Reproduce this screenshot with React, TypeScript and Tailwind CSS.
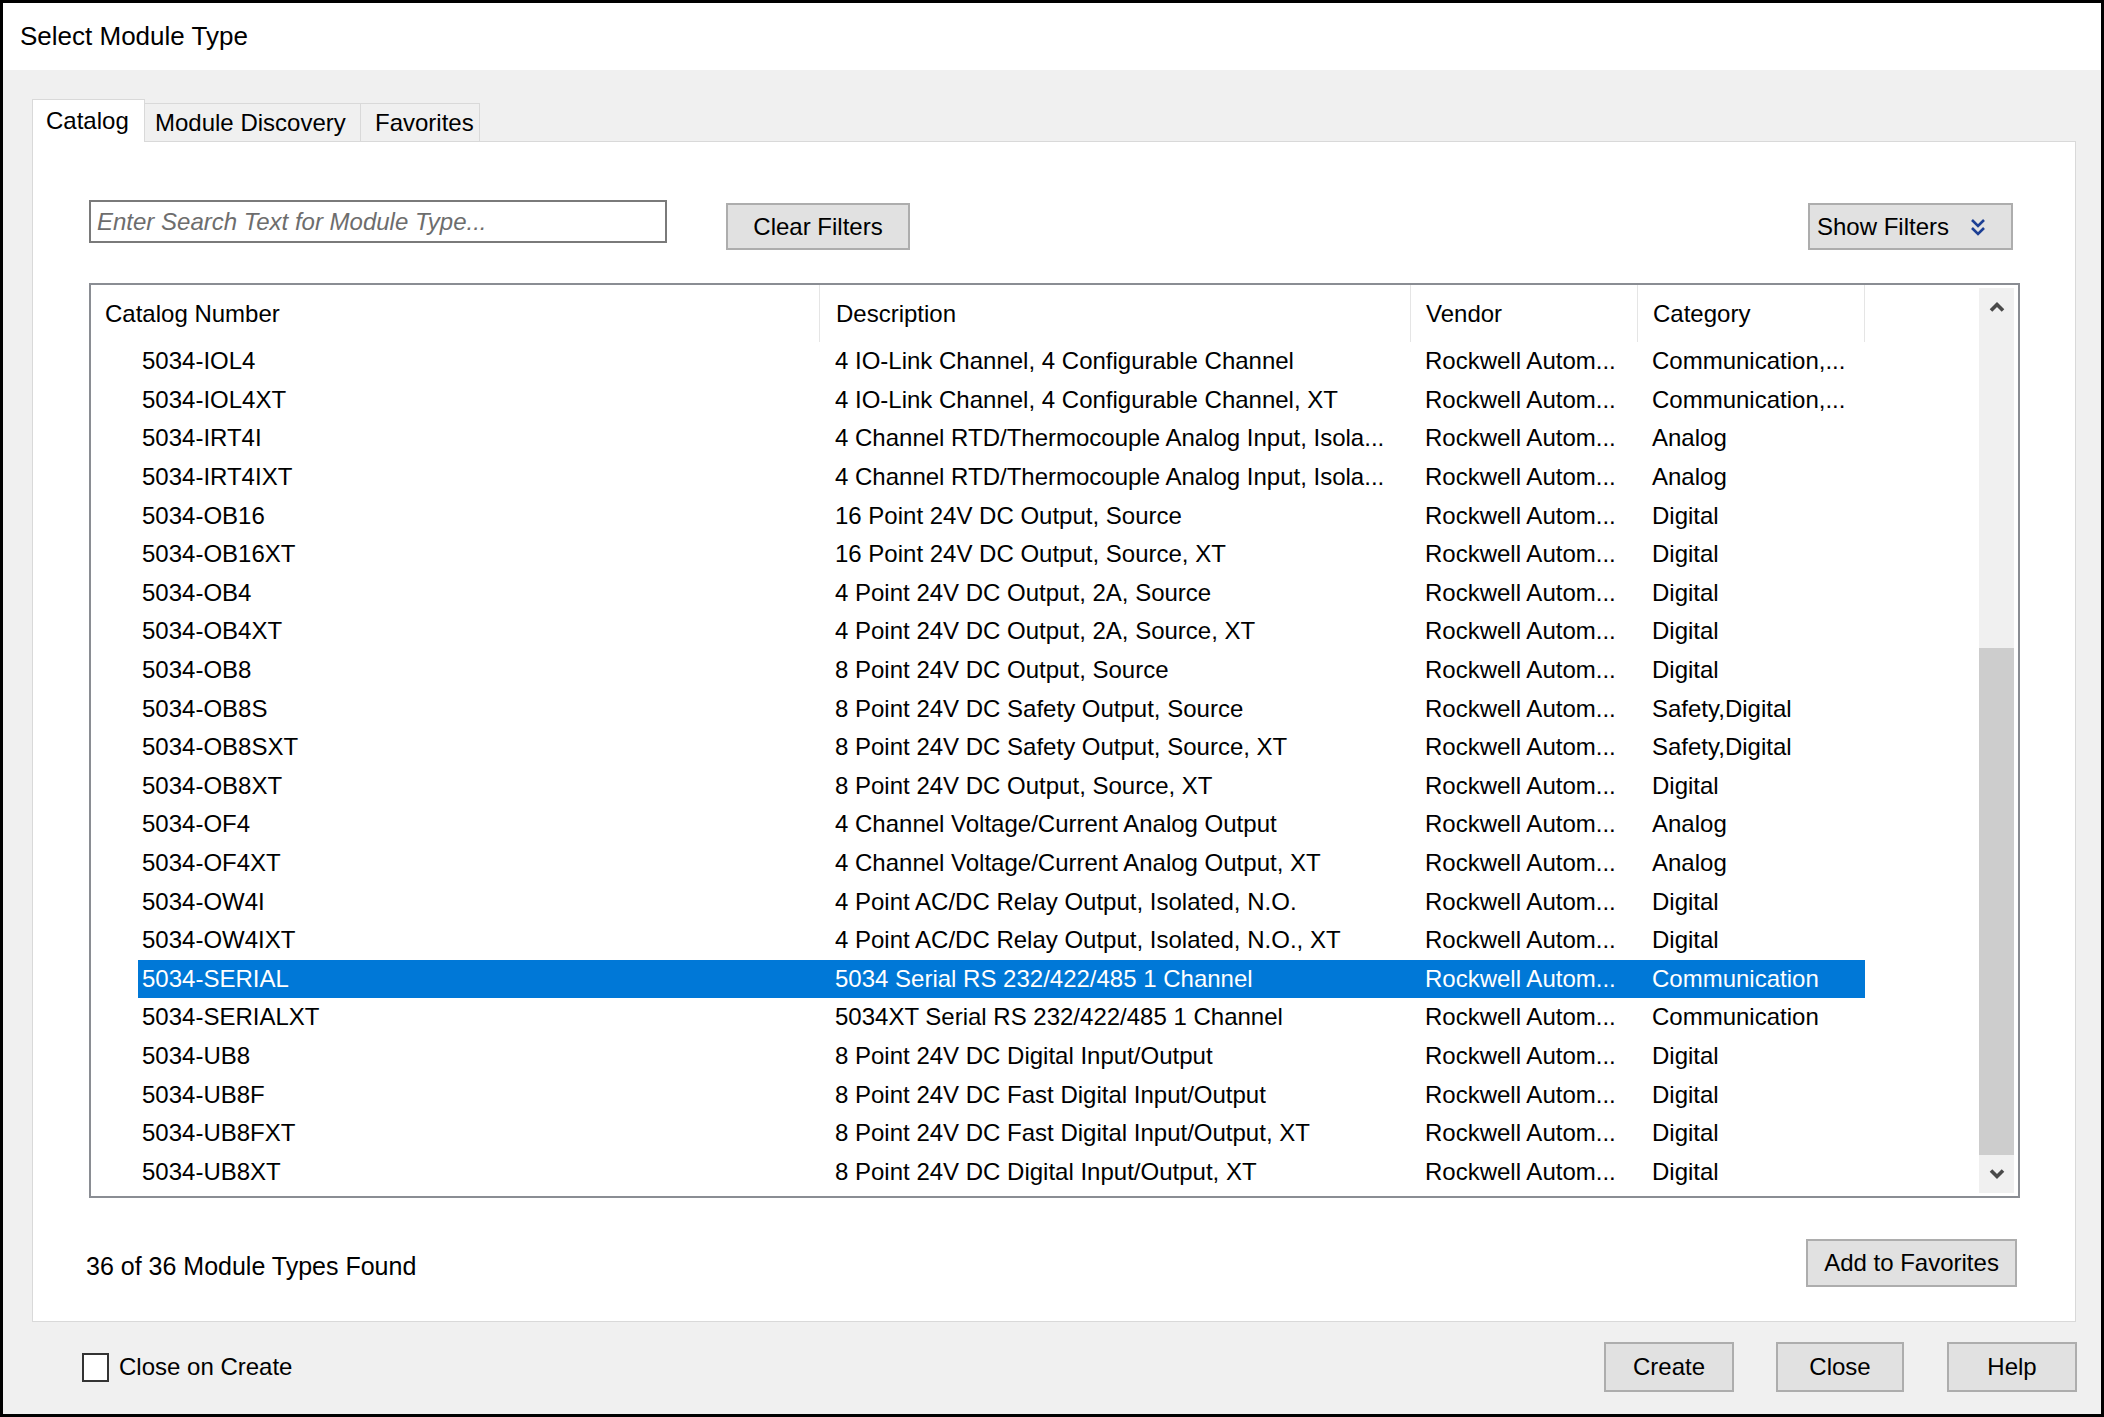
import React from 'react';

type Row = { cat: string; desc: string; category: string };

const rows: Row[] = [
  { cat: '5034-IOL4', desc: '4 IO-Link Channel, 4 Configurable Channel', category: 'Communication,...' },
  { cat: '5034-IOL4XT', desc: '4 IO-Link Channel, 4 Configurable Channel, XT', category: 'Communication,...' },
  { cat: '5034-IRT4I', desc: '4 Channel RTD/Thermocouple Analog Input, Isola...', category: 'Analog' },
  { cat: '5034-IRT4IXT', desc: '4 Channel RTD/Thermocouple Analog Input, Isola...', category: 'Analog' },
  { cat: '5034-OB16', desc: '16 Point 24V DC Output, Source', category: 'Digital' },
  { cat: '5034-OB16XT', desc: '16 Point 24V DC Output, Source, XT', category: 'Digital' },
  { cat: '5034-OB4', desc: '4 Point 24V DC Output, 2A, Source', category: 'Digital' },
  { cat: '5034-OB4XT', desc: '4 Point 24V DC Output, 2A, Source, XT', category: 'Digital' },
  { cat: '5034-OB8', desc: '8 Point 24V DC Output, Source', category: 'Digital' },
  { cat: '5034-OB8S', desc: '8 Point 24V DC Safety Output, Source', category: 'Safety,Digital' },
  { cat: '5034-OB8SXT', desc: '8 Point 24V DC Safety Output, Source, XT', category: 'Safety,Digital' },
  { cat: '5034-OB8XT', desc: '8 Point 24V DC Output, Source, XT', category: 'Digital' },
  { cat: '5034-OF4', desc: '4 Channel Voltage/Current Analog Output', category: 'Analog' },
  { cat: '5034-OF4XT', desc: '4 Channel Voltage/Current Analog Output, XT', category: 'Analog' },
  { cat: '5034-OW4I', desc: '4 Point AC/DC Relay Output, Isolated, N.O.', category: 'Digital' },
  { cat: '5034-OW4IXT', desc: '4 Point AC/DC Relay Output, Isolated, N.O., XT', category: 'Digital' },
  { cat: '5034-SERIAL', desc: '5034 Serial RS 232/422/485 1 Channel', category: 'Communication' },
  { cat: '5034-SERIALXT', desc: '5034XT Serial RS 232/422/485 1 Channel', category: 'Communication' },
  { cat: '5034-UB8', desc: '8 Point 24V DC Digital Input/Output', category: 'Digital' },
  { cat: '5034-UB8F', desc: '8 Point 24V DC Fast Digital Input/Output', category: 'Digital' },
  { cat: '5034-UB8FXT', desc: '8 Point 24V DC Fast Digital Input/Output, XT', category: 'Digital' },
  { cat: '5034-UB8XT', desc: '8 Point 24V DC Digital Input/Output, XT', category: 'Digital' },
];

const SELECTED = '5034-SERIAL';

const Button: React.FC<{ className?: string; children: React.ReactNode }> = ({ className = '', children }) => (
  <button
    className={`flex items-center justify-center bg-[#e1e1e1] border-2 border-[#adadad] text-[24px] text-black leading-none ${className}`}
  >
    {children}
  </button>
);

const Chevron: React.FC<{ up?: boolean }> = ({ up }) => (
  <svg width="16" height="12" viewBox="0 0 16 12">
    <polyline
      points={up ? '2,9.5 8,3.5 14,9.5' : '2,2.5 8,8.5 14,2.5'}
      fill="none"
      stroke="#4a4a4a"
      strokeWidth="3.6"
    />
  </svg>
);

export default function App() {
  return (
    <div className="w-[2104px] h-[1417px] border-[3px] border-black bg-[#f0f0f0] flex flex-col font-['Liberation_Sans',Arial,sans-serif] text-black overflow-hidden">
      {/* Title bar */}
      <div className="h-[67px] bg-white flex items-center pl-[17px] text-[26px]">Select Module Type</div>

      {/* Body */}
      <div className="flex-1 flex flex-col pt-[29px] pl-[29px] pr-[25px]">
        {/* Tabs */}
        <div className="flex items-end h-[42px]">
          <div className="relative z-10 h-[43px] w-[113px] bg-white border border-b-0 border-[#d9d9d9] flex items-center pl-[13px] text-[24px] mb-[-1px]">
            Catalog
          </div>
          <div className="h-[38px] w-[216px] bg-[#f0f0f0] border border-l-0 border-b-0 border-[#d9d9d9] flex items-center pl-[10px] text-[24px]">
            Module Discovery
          </div>
          <div className="h-[38px] w-[119px] bg-[#f0f0f0] border border-l-0 border-b-0 border-[#d9d9d9] flex items-center pl-[14px] text-[24px]">
            Favorites
          </div>
        </div>

        {/* Tab panel */}
        <div className="h-[1181px] bg-white border border-[#d9d9d9] flex flex-col pt-[58px] pl-[56px] pr-[55px]">
          {/* Search row */}
          <div className="flex items-start">
            <div className="w-[578px] h-[43px] border-2 border-[#7a7a7a] flex items-center pl-[6px] text-[24px] italic text-[#6d6d6d]">
              Enter Search Text for Module Type...
            </div>
            <Button className="ml-[59px] mt-[3px] w-[184px] h-[47px]">Clear Filters</Button>
            <Button className="ml-auto mr-[7px] mt-[3px] w-[205px] h-[47px] justify-start pl-[7px]">
              <span>Show Filters</span>
              <svg width="18" height="20" viewBox="0 0 18 20" className="ml-[20px]">
                <polyline points="3,3 9,9 15,3" fill="none" stroke="#1c3f94" strokeWidth="2.6" />
                <polyline points="3,11 9,17 15,11" fill="none" stroke="#1c3f94" strokeWidth="2.6" />
              </svg>
            </Button>
          </div>

          {/* List */}
          <div className="mt-[33px] h-[915px] border-2 border-[#8a8d93] flex text-[24px]">
            <div className="flex-1 flex flex-col">
              {/* Header */}
              <div className="h-[57px] flex items-stretch">
                <div className="w-[728px] flex items-center pl-[14px]">Catalog Number</div>
                <div className="w-[591px] flex items-center pl-[16px] border-l border-[#e5e5e5]">Description</div>
                <div className="w-[227px] flex items-center pl-[15px] border-l border-[#e5e5e5]">Vendor</div>
                <div className="w-[228px] flex items-center pl-[15px] border-l border-r border-[#e5e5e5]">Category</div>
              </div>
              {/* Rows */}
              {rows.map((r) => {
                const sel = r.cat === SELECTED;
                return (
                  <div key={r.cat} className="h-[38.6px] flex pl-[47px]">
                    <div className={`w-[1727px] flex items-center whitespace-nowrap ${sel ? 'bg-[#0078d7] text-white' : ''}`}>
                      <div className="w-[681px] pl-[4px]">{r.cat}</div>
                      <div className="w-[591px] pl-[16px]">{r.desc}</div>
                      <div className="w-[227px] pl-[15px]">Rockwell Autom...</div>
                      <div className="w-[228px] pl-[15px]">{r.category}</div>
                    </div>
                  </div>
                );
              })}
            </div>

            {/* Scrollbar */}
            <div className="w-[35px] mr-[4px] my-[3px] bg-[#f0f0f0] flex flex-col">
              <div className="h-[38px] flex items-center justify-center">
                <Chevron up />
              </div>
              <div className="flex-1 flex flex-col">
                <div className="h-[322px]" />
                <div className="flex-1 bg-[#cdcdcd]" />
              </div>
              <div className="h-[38px] flex items-center justify-center">
                <Chevron />
              </div>
            </div>
          </div>

          {/* Bottom row */}
          <div className="mt-[41px] flex items-center">
            <div className="ml-[-3px] mt-[8px] text-[25px]">36 of 36 Module Types Found</div>
            <Button className="ml-auto mr-[3px] w-[211px] h-[48px]">Add to Favorites</Button>
          </div>
        </div>

        {/* Footer */}
        <div className="flex items-center pt-[20px]">
          <div className="ml-[50px] w-[27px] h-[29px] bg-white border-2 border-[#333333]" />
          <div className="ml-[10px] text-[24px]">Close on Create</div>
          <Button className="ml-auto w-[130px] h-[50px]">Create</Button>
          <Button className="ml-[42px] w-[128px] h-[50px]">Close</Button>
          <Button className="ml-[43px] mr-[-1px] w-[130px] h-[50px]">Help</Button>
        </div>
      </div>
    </div>
  );
}
